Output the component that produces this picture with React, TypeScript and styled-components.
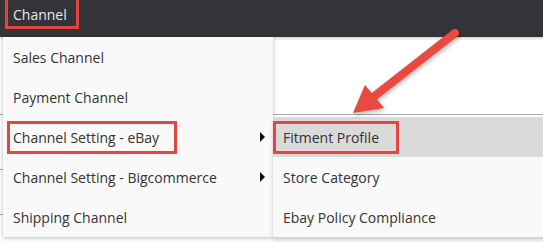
import React from "react";
import styled, { createGlobalStyle } from "styled-components";

const GlobalStyle = createGlobalStyle`
  html, body {
    margin: 0;
    padding: 0;
    background: #ffffff;
  }
  body {
    font-family: "Open Sans", "Liberation Sans", sans-serif;
    font-size: 14px;
    color: #333;
  }
`;

const Page = styled.div`
  position: relative;
  width: 543px;
  height: 243px;
  overflow: hidden;
  background: #ffffff;
`;

const TopBar = styled.div`
  height: 37px;
  background: #333338;
  display: flex;
  align-items: flex-start;
  padding-left: 5px;
  box-shadow: 0 2px 2px rgba(0, 0, 0, 0.15);
  position: relative;
  z-index: 1;
`;

const NavItem = styled.div`
  height: 29px;
  box-sizing: border-box;
  display: flex;
  align-items: center;
  padding: 2px 9px 0 5px;
  color: #e8e8ea;
  font-size: 14px;
  border: 3px solid #e2463f;
  border-top: none;
`;

const Content = styled.div`
  display: flex;
  flex-direction: column;
`;

const ContentRow = styled.div<{ $h: number }>`
  height: ${(p) => p.$h}px;
  border-bottom: 1px solid #a8a8a8;
  box-sizing: border-box;
`;

const Dropdown = styled.ul`
  position: absolute;
  top: 37px;
  left: 3px;
  width: 270px;
  margin: 0;
  padding: 0;
  list-style: none;
  background: #f9f9f9;
  box-shadow: 0 1px 4px rgba(0, 0, 0, 0.28);
  z-index: 2;
`;

const Item = styled.li<{ $active?: boolean }>`
  position: relative;
  height: 40px;
  display: flex;
  align-items: center;
  justify-content: space-between;
  padding: 0 8px 0 10px;
  white-space: nowrap;
  background: ${(p) => (p.$active ? "#dadada" : "transparent")};
`;

const Label = styled.span<{ $marked?: boolean; $shift?: number; $tail?: number }>`
  display: inline-flex;
  align-items: center;
  box-sizing: border-box;
  ${(p) =>
    p.$marked
      ? `
    height: 33px;
    margin-left: -${p.$shift ?? 6}px;
    margin-top: 1px;
    padding: 0 ${p.$tail ?? 15}px 0 ${(p.$shift ?? 6) - 3}px;
    border: 3px solid #e2463f;
  `
      : ""}
`;

const Caret = styled.span`
  width: 0;
  height: 0;
  border-left: 5px solid #111;
  border-top: 5px solid transparent;
  border-bottom: 5px solid transparent;
`;

const Submenu = styled.ul`
  position: absolute;
  top: 0;
  left: 270px;
  width: 280px;
  margin: 0;
  padding: 0;
  list-style: none;
  background: #f9f9f9;
  box-shadow: 0 3px 4px rgba(0, 0, 0, 0.2);
`;

const Arrow = styled.svg`
  position: absolute;
  left: 0;
  top: 0;
  pointer-events: none;
  z-index: 3;
  filter: drop-shadow(1px 2px 2px rgba(0, 0, 0, 0.3));
`;

export default function App() {
  return (
    <>
      <GlobalStyle />
      <Page>
        <TopBar>
          <NavItem>Channel</NavItem>
        </TopBar>
        <Content>
          <ContentRow $h={78} />
          <ContentRow $h={55} />
          <ContentRow $h={45} />
          <ContentRow $h={40} />
        </Content>
        <Dropdown>
          <Item>
            <Label>Sales Channel</Label>
          </Item>
          <Item>
            <Label>Payment Channel</Label>
          </Item>
          <Item>
            <Label $marked $shift={6} $tail={15}>
              Channel Setting - eBay
            </Label>
            <Caret />
            <Submenu>
              <Item $active>
                <Label $marked $shift={10} $tail={17}>
                  Fitment Profile
                </Label>
              </Item>
              <Item>
                <Label>Store Category</Label>
              </Item>
              <Item>
                <Label>Ebay Policy Compliance</Label>
              </Item>
            </Submenu>
          </Item>
          <Item>
            <Label>Channel Setting - Bigcommerce</Label>
            <Caret />
          </Item>
          <Item>
            <Label>Shipping Channel</Label>
          </Item>
        </Dropdown>
        <Arrow width="543" height="243" viewBox="0 0 543 243">
          <line x1="455" y1="33" x2="372" y2="98" stroke="#e84a3f" strokeWidth="8" strokeLinecap="round" />
          <polygon points="353,113 365,85 384,108" fill="#e84a3f" />
        </Arrow>
      </Page>
    </>
  );
}
